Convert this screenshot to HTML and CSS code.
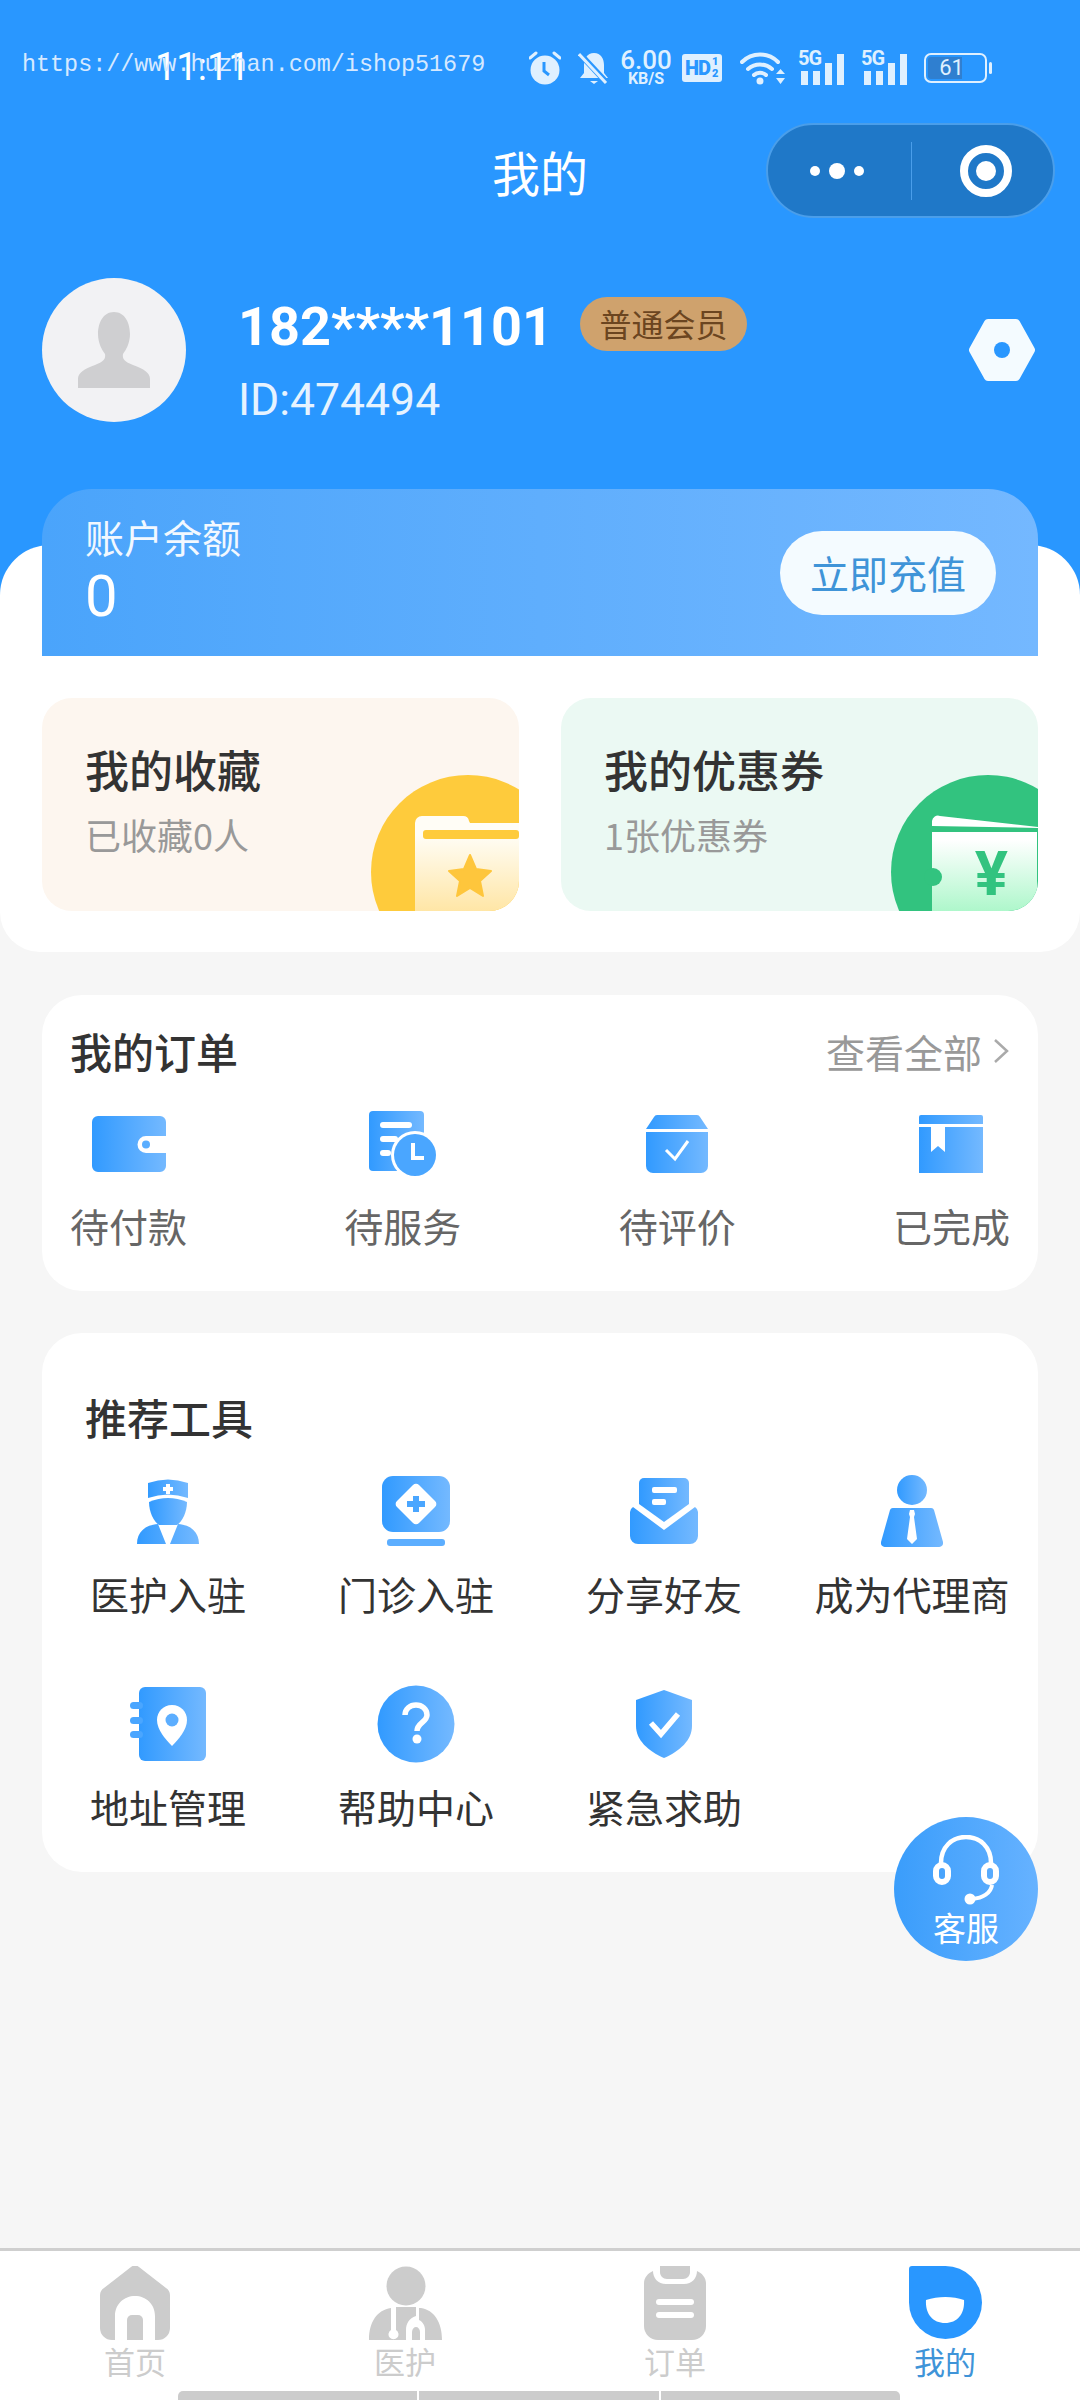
FILE: index.html
```html
<!DOCTYPE html>
<html lang="zh-CN">
<head>
    <meta charset="UTF-8">
    <meta name="viewport" content="width=device-width, initial-scale=1.0">
    <title>我的</title>
    <link rel="stylesheet" href="styles.css">
</head>
<body>
    <svg class="defs" width="0" height="0">
        <defs>
            <linearGradient id="blue"><stop offset="0" stop-color="#319aff"/><stop offset="1" stop-color="#74b9ff"/></linearGradient>
            <linearGradient id="paleyellow" x1="0" y1="0" x2="0" y2="1"><stop offset="0.2" stop-color="#fffdf6"/><stop offset="1" stop-color="#ffe6a6"/></linearGradient>
            <linearGradient id="palegreen" x1="0" y1="0" x2="0" y2="1"><stop offset="0.1" stop-color="#ffffff"/><stop offset="1" stop-color="#aef7cb"/></linearGradient>
        </defs>
    </svg>

    <div id="app">
        <header class="top">
            <div class="watermark">https://www.huzhan.com/ishop51679</div>
            <div class="status-bar">
                <span class="time">11:11</span>
                <div class="status-icons">
                    <svg class="st-alarm" width="32" height="34" viewBox="0 0 32 34">
                        <circle cx="16" cy="19" r="14.5" fill="#dff0ff"/>
                        <path d="M1 7l6-5M31 7l-6-5" stroke="#dff0ff" stroke-width="3" stroke-linecap="round"/>
                        <path d="M15 11v9l5 4" fill="none" stroke="#2997ff" stroke-width="3"/>
                    </svg>
                    <svg class="st-bell" width="32" height="34" viewBox="0 0 32 34">
                        <path d="M16 2c7 0 10 6 10 12v8l4 5H2l4-5v-8C6 8 9 2 16 2z" fill="#dff0ff"/>
                        <path d="M12 30h8l-4 3z" fill="#dff0ff"/>
                        <path d="M2 3l27 29" stroke="#2997ff" stroke-width="6"/>
                        <path d="M1 3l27 29" stroke="#dff0ff" stroke-width="3"/>
                    </svg>
                    <div class="st-speed"><b>6.00</b><span>KB/S</span></div>
                    <div class="st-hd">HD<small>1<br>2</small></div>
                    <svg class="st-wifi" width="46" height="34" viewBox="0 0 46 34">
                        <path d="M2 11c10-10 26-10 36 0M8 18c7-6 17-6 24 0M14 24c3-3 9-3 12 0" fill="none" stroke="#dff0ff" stroke-width="4" stroke-linecap="round"/>
                        <circle cx="20" cy="30" r="3.5" fill="#dff0ff"/>
                        <path d="M36 23l4.500-5 4.500 5zM36 27l4.500 6 4.500-6z" fill="#dff0ff"/>
                    </svg>
                    <div class="st-signal"><span class="st-5g">5G</span><i class="b1"></i><i class="b1"></i><i class="b2"></i><i class="b3"></i></div>
                    <div class="st-signal"><span class="st-5g">5G</span><i class="b1"></i><i class="b1"></i><i class="b2"></i><i class="b3"></i></div>
                    <div class="st-battery"><div class="st-level">61</div></div>
                </div>
            </div>
            <nav class="navbar">
                <span></span>
                <h1>我的</h1>
                <div class="capsule">
                    <svg width="56" height="16" viewBox="0 0 56 16"><circle cx="6" cy="8" r="5" fill="#fff"/><circle cx="28" cy="8" r="8" fill="#fff"/><circle cx="50" cy="8" r="5" fill="#fff"/></svg>
                    <i class="capsule-line"></i>
                    <svg width="54" height="54" viewBox="0 0 54 54"><circle cx="27" cy="27" r="22" fill="none" stroke="#fff" stroke-width="8"/><circle cx="27" cy="27" r="10" fill="#fff"/></svg>
                </div>
            </nav>
            <div class="profile">
                <div class="avatar">
                    <svg width="76" height="76" viewBox="0 0 76 76"><path d="M38 0c11 0 16 11 16 22 0 9-4 16-7 20-1 5 2 8 10 11 11 4 17 8 17 14v9H2v-9c0-6 6-10 17-14 8-3 11-6 10-11-3-4-7-11-7-20C22 11 27 0 38 0z" fill="#cfcfd1"/></svg>
                </div>
                <div class="profile-info">
                    <div class="name-row"><span class="phone">182****1101</span><span class="badge">普通会员</span></div>
                    <div class="user-id">ID:474494</div>
                </div>
                <svg class="settings" width="68" height="64" viewBox="0 0 68 64"><path d="M20 5h28l15 27-15 27H20L5 32z" fill="#f4fbff" stroke="#f4fbff" stroke-width="8" stroke-linejoin="round"/><circle cx="34" cy="32" r="8" fill="#2997ff"/></svg>
            </div>
        </header>

        <section class="panel">
            <div class="balance">
                <div>
                    <div class="balance-label">账户余额</div>
                    <div class="balance-num">0</div>
                </div>
                <div class="recharge">立即充值</div>
            </div>
            <div class="promo-row">
                <div class="promo promo-fav">
                    <div class="promo-title">我的收藏</div>
                    <div class="promo-sub">已收藏0人</div>
                    <svg class="promo-pic" width="149" height="136" viewBox="0 0 149 136">
                        <circle cx="98" cy="97" r="97" fill="#fecb3c"/>
                        <path d="M45 136V48a7 7 0 0 1 7-7h41a6 6 0 0 1 6 5l1 2h49v88z" fill="url(#paleyellow)"/>
                        <rect x="53" y="55" width="96" height="9" rx="3" fill="#fecb3c"/>
                        <path d="M100 80l6 14 15 2-11 10 3 15-13-8-13 8 3-15-11-10 15-2z" fill="#fec63c" stroke="#fec63c" stroke-width="2" stroke-linejoin="round"/>
                    </svg>
                </div>
                <div class="promo promo-coupon">
                    <div class="promo-title">我的优惠券</div>
                    <div class="promo-sub">1张优惠券</div>
                    <svg class="promo-pic" width="147" height="136" viewBox="0 0 147 136">
                        <circle cx="97" cy="97" r="97" fill="#32c37f"/>
                        <path d="M41 136V57l105 0v79z" fill="url(#palegreen)"/>
                        <path d="M41 51V46a6 6 0 0 1 8-5l98 11v1z" fill="#fff"/>
                        <circle cx="42" cy="102" r="9" fill="#32c37f"/>
                    </svg>
                    <span class="yuan">¥</span>
                </div>
            </div>
        </section>

        <section class="card orders">
            <div class="orders-head">
                <h2>我的订单</h2>
                <div class="more">查看全部
                    <svg width="18" height="26" viewBox="0 0 18 26"><path d="M3 2l12 11L3 24" fill="none" stroke="#aaa" stroke-width="2.500"/></svg>
                </div>
            </div>
            <div class="orders-row">
                <div class="order-item">
                    <div class="icon-box">
                        <svg width="74" height="56" viewBox="0 0 74 56"><path d="M6 0h62a6 6 0 0 1 6 6v14H54a8.500 8.500 0 0 0 0 17h20v13a6 6 0 0 1-6 6H6a6 6 0 0 1-6-6V6a6 6 0 0 1 6-6z" fill="url(#blue)"/><circle cx="54" cy="28.500" r="4" fill="#5aaeff"/></svg>
                    </div>
                    <span>待付款</span>
                </div>
                <div class="order-item">
                    <div class="icon-box">
                        <svg width="68" height="66" viewBox="0 0 68 66"><path d="M4 0h47a4 4 0 0 1 4 4v56H4a4 4 0 0 1-4-4V4a4 4 0 0 1 4-4z" fill="url(#blue)"/><rect x="11" y="11" width="32" height="6" rx="3" fill="#fff"/><rect x="11" y="25" width="18" height="6" rx="3" fill="#fff"/><rect x="11" y="39" width="11" height="6" rx="3" fill="#fff"/><circle cx="46" cy="44" r="24" fill="#fff"/><circle cx="46" cy="44" r="21" fill="#4aa6ff"/><path d="M44 32v15h11" fill="none" stroke="#fff" stroke-width="4"/></svg>
                    </div>
                    <span>待服务</span>
                </div>
                <div class="order-item">
                    <div class="icon-box">
                        <svg width="62" height="58" viewBox="0 0 62 58"><path d="M11 0h40a4 4 0 0 1 3 2l8 12H0L8 2a4 4 0 0 1 3-2z" fill="url(#blue)"/><path d="M0 17h62v34a7 7 0 0 1-7 7H7a7 7 0 0 1-7-7z" fill="url(#blue)"/><path d="M20 35l9 9 13-18" fill="none" stroke="#fff" stroke-width="3"/></svg>
                    </div>
                    <span>待评价</span>
                </div>
                <div class="order-item">
                    <div class="icon-box">
                        <svg width="64" height="58" viewBox="0 0 64 58"><path d="M2 0h60a2 2 0 0 1 2 2v7H0V2a2 2 0 0 1 2-2z" fill="url(#blue)"/><path d="M0 12h12v25l7-6 7 6V12h38v46H0z" fill="url(#blue)"/></svg>
                    </div>
                    <span>已完成</span>
                </div>
            </div>
        </section>

        <section class="card tools">
            <h2>推荐工具</h2>
            <div class="tools-grid">
                <div class="tool">
                    <div class="icon-box">
                        <svg width="62" height="66" viewBox="0 0 62 66"><path d="M11 5q20-7 40 0v15q-20-7-40 0z" fill="url(#blue)"/><path d="M29 6h4v3h3v4h-3v3h-4v-3h-3V9h3z" fill="#fff"/><path d="M12 24q19-8 38 0c0 10-5 20-10 23H22c-5-3-10-13-10-23z" fill="url(#blue)"/><path d="M0 66c0-12 8-19 21-20l8 20zM62 66c0-12-8-19-21-20l-8 20z" fill="url(#blue)"/></svg>
                    </div>
                    <span>医护入驻</span>
                </div>
                <div class="tool">
                    <div class="icon-box">
                        <svg width="68" height="70" viewBox="0 0 68 70"><rect width="68" height="56" rx="11" fill="url(#blue)"/><rect x="5" y="63" width="58" height="7" rx="3" fill="#5caeff"/><path d="M31 9a4 4 0 0 1 6 0l16 16a4 4 0 0 1 0 6L37 47a4 4 0 0 1-6 0L15 31a4 4 0 0 1 0-6z" fill="#fff"/><path d="M31 20h6v5h6v6h-6v5h-6v-5h-6v-6h6z" fill="#4aa6ff"/></svg>
                    </div>
                    <span>门诊入驻</span>
                </div>
                <div class="tool">
                    <div class="icon-box">
                        <svg width="68" height="66" viewBox="0 0 68 66"><path d="M14 0h40a5 5 0 0 1 5 5v21L34 44 9 26V5a5 5 0 0 1 5-5z" fill="url(#blue)"/><rect x="22" y="9" width="25" height="6" rx="2" fill="#fff"/><rect x="22" y="21" width="14" height="6" rx="2" fill="#fff"/><path d="M0 34q0-3 3-5l31 23 31-23q3 2 3 5v24a8 8 0 0 1-8 8H8a8 8 0 0 1-8-8z" fill="url(#blue)"/></svg>
                    </div>
                    <span>分享好友</span>
                </div>
                <div class="tool">
                    <div class="icon-box">
                        <svg width="62" height="72" viewBox="0 0 62 72"><circle cx="31" cy="15" r="15" fill="url(#blue)"/><path d="M12 33h38a3 3 0 0 1 3 2l9 32a4 4 0 0 1-4 5H4a4 4 0 0 1-4-5l9-32a3 3 0 0 1 3-2z" fill="url(#blue)"/><path d="M29 35h4l1 4-1 3 3 22-5 5-5-5 3-22-1-3z" fill="#fff"/></svg>
                    </div>
                    <span>成为代理商</span>
                </div>
                <div class="tool">
                    <div class="icon-box">
                        <svg width="76" height="74" viewBox="0 0 76 74"><rect x="9" width="67" height="74" rx="6" fill="url(#blue)"/><rect y="15" width="13" height="7" rx="3.500" fill="#4aa6ff"/><rect y="30" width="13" height="7" rx="3.500" fill="#4aa6ff"/><rect y="44" width="13" height="7" rx="3.500" fill="#4aa6ff"/><path d="M42 18c9 0 15 7 15 15 0 10-9 20-15 26-6-6-15-16-15-26 0-8 6-15 15-15z" fill="#fff"/><circle cx="42" cy="33" r="6.500" fill="#5caeff"/></svg>
                    </div>
                    <span>地址管理</span>
                </div>
                <div class="tool">
                    <div class="icon-box">
                        <svg width="78" height="78" viewBox="0 0 78 78"><circle cx="39" cy="39" r="38.500" fill="url(#blue)"/><path d="M28 30c0-6 5-10 11-10s11 4 11 10c0 7-10 8-10 16" fill="none" stroke="#fff" stroke-width="5.500"/><circle cx="40" cy="54" r="4.500" fill="#fff"/></svg>
                    </div>
                    <span>帮助中心</span>
                </div>
                <div class="tool">
                    <div class="icon-box">
                        <svg width="56" height="68" viewBox="0 0 56 68"><path d="M28 0l28 10v26c0 14-12 25-28 32C12 61 0 50 0 36V10z" fill="url(#blue)"/><path d="M15 33l10 11 17-20" fill="none" stroke="#fff" stroke-width="5.500"/></svg>
                    </div>
                    <span>紧急求助</span>
                </div>
            </div>
        </section>

        <div class="spacer"></div>

        <footer class="tabbar">
            <div class="tabs">
                <div class="tab">
                    <svg width="70" height="74" viewBox="0 0 70 74"><path d="M31 1a6 6 0 0 1 8 0l27 21a9 9 0 0 1 4 7v33a12 12 0 0 1-12 12h-3V50c0-12-9-20-20-20s-20 8-20 20v24h-3A12 12 0 0 1 0 62V29a9 9 0 0 1 4-7z" fill="#ccc"/><path d="M27 74V54a5 5 0 0 1 5-5h6a5 5 0 0 1 5 5v20z" fill="#ccc"/></svg>
                    <span>首页</span>
                </div>
                <div class="tab">
                    <svg width="73" height="74" viewBox="0 0 73 74"><circle cx="37" cy="20" r="19.500" fill="#ccc"/><path d="M22 42v22a5 5 0 1 0 5 0V41l20 0v9c-7 2-10 8-10 14v10H0c0-18 8-30 22-32z" fill="#ccc"/><path d="M52 42c13 2 21 14 21 32H56V64c0-4-2-8-6-10V42z" fill="#ccc"/><path d="M43 74v-8c0-3 2-5 4-5s4 2 4 5v8z" fill="#ccc"/></svg>
                    <span>医护</span>
                </div>
                <div class="tab">
                    <svg width="62" height="74" viewBox="0 0 62 74"><path d="M16 0h30v6c0 4-3 7-7 7H23c-4 0-7-3-7-7z" fill="#ccc"/><path d="M9 5c0 7 5 13 13 13h18c8 0 13-6 13-13 5 2 9 7 9 12v43a14 14 0 0 1-14 14H14A14 14 0 0 1 0 60V17c0-5 4-10 9-12z" fill="#ccc"/><rect x="12" y="33" width="38" height="6" rx="3" fill="#fff"/><rect x="12" y="46" width="38" height="6" rx="3" fill="#fff"/></svg>
                    <span>订单</span>
                </div>
                <div class="tab tab-on">
                    <svg width="73" height="74" viewBox="0 0 73 74"><path d="M0 3a3 3 0 0 1 3-3h33.500A36.500 36.500 0 1 1 0 36.500z" fill="#2997ff"/><path d="M17 34c12-4 27-4 38 0 1 14-7 23-19 23S16 48 17 34z" fill="#fff"/></svg>
                    <span>我的</span>
                </div>
            </div>
            <div class="home-bar"><i></i><i></i><i></i></div>
        </footer>

        <div class="service">
            <svg width="68" height="70" viewBox="0 0 68 70">
                <path d="M9 28C9 12 20 2 34 2s25 10 25 26" fill="none" stroke="#fff" stroke-width="4.500"/>
                <rect x="4" y="30" width="12" height="17" rx="6" fill="none" stroke="#fff" stroke-width="6"/>
                <rect x="52" y="30" width="12" height="17" rx="6" fill="none" stroke="#fff" stroke-width="6"/>
                <path d="M60 50c-1 8-9 13-20 14" fill="none" stroke="#fff" stroke-width="4"/>
                <circle cx="38" cy="64" r="5.500" fill="#fff"/>
            </svg>
            <span>客服</span>
        </div>
    </div>
</body>
</html>
```

FILE: styles.css
```css
* {
    box-sizing: border-box;
}

html, body {
    margin: 0;
    padding: 0;
}

body {
    font-family: "Noto Sans CJK SC", Roboto, sans-serif;
    background: #f6f6f6;
    color: #333;
}

h1, h2 {
    margin: 0;
    font-weight: 500;
}

.defs {
    position: absolute;
}

#app {
    position: relative;
    width: 1080px;
    height: 2400px;
    display: flex;
    flex-direction: column;
    overflow: hidden;
}

/* blue header */
.top {
    position: relative;
    height: 600px;
    flex: none;
    background: #2997ff;
    color: #fff;
}

.watermark {
    position: absolute;
    left: 22px;
    top: 50px;
    font-family: "Liberation Mono", monospace;
    font-size: 23.400px;
    line-height: 30px;
    color: #d6e9ff;
}

.status-bar {
    height: 123px;
    padding: 50px 0 0 155px;
    display: flex;
}

.time {
    font-family: Roboto, sans-serif;
    font-size: 38px;
    line-height: 34px;
    width: 88px;
    margin-right: 286px;
    white-space: nowrap;
}

.status-icons {
    height: 36px;
    display: flex;
    align-items: center;
    color: #dff0ff;
    font-family: Roboto, sans-serif;
}

.st-bell {
    margin-left: 17px;
}

.st-speed {
    width: 52px;
    margin-left: 10px;
    display: flex;
    flex-direction: column;
    align-items: center;
    line-height: 1;
}

.st-speed b {
    font-size: 26px;
    font-weight: 500;
    line-height: 21px;
}

.st-speed span {
    font-size: 16px;
    font-weight: 700;
    line-height: 15px;
}

.st-hd {
    width: 40px;
    height: 28px;
    margin-left: 10px;
    background: #dff0ff;
    border-radius: 3px;
    color: #2997ff;
    font-size: 20px;
    font-weight: 900;
    line-height: 28px;
    padding-left: 3px;
    display: flex;
    align-items: center;
    letter-spacing: -1px;
}

.st-hd small {
    font-size: 11px;
    line-height: 12px;
    margin-left: 2px;
}

.st-wifi {
    margin-left: 18px;
}

.st-signal {
    position: relative;
    width: 47px;
    height: 34px;
    margin-left: 12px;
    display: flex;
    align-items: flex-end;
    justify-content: space-between;
    padding: 0 1px 0 3px;
}

.st-signal + .st-signal {
    margin-left: 16px;
}

.st-signal i {
    width: 7px;
    background: #dff0ff;
}

.st-signal .b1 {
    height: 14px;
}

.st-signal .b2 {
    height: 22px;
}

.st-signal .b3 {
    height: 31px;
}

.st-5g {
    position: absolute;
    left: 0;
    top: -3px;
    font-size: 20px;
    font-weight: 700;
    line-height: 20px;
    letter-spacing: -1px;
}

.st-battery {
    position: relative;
    width: 63px;
    height: 30px;
    margin-left: 16px;
    border: 2.500px solid #dff0ff;
    border-radius: 7px;
    padding: 2px;
}

.st-battery::after {
    content: "";
    position: absolute;
    right: -7px;
    top: 7px;
    width: 3px;
    height: 12px;
    background: #dff0ff;
    border-radius: 2px;
}

.st-level {
    height: 100%;
    border-radius: 3px;
    font-size: 22px;
    line-height: 21px;
    background: linear-gradient(to right, #2f7fd0 61%, transparent 61%);
    text-align: center;
    padding-right: 8px;
}

.navbar {
    height: 95px;
    display: grid;
    grid-template-columns: 1fr auto 1fr;
    align-items: center;
    padding: 0 25px;
}

.navbar h1 {
    font-size: 48px;
    font-weight: 400;
}

.capsule {
    justify-self: end;
    width: 289px;
    height: 95px;
    background: #1f78c8;
    border: 2px solid #4a9eea;
    border-radius: 48px;
    display: flex;
    align-items: center;
    padding-left: 41px;
}

.capsule-line {
    width: 1px;
    height: 58px;
    background: #4a9eea;
    margin: 0 47px 0 46px;
}

.profile {
    margin-top: 60px;
    padding: 0 42px;
    display: flex;
    align-items: flex-start;
}

.avatar {
    width: 144px;
    height: 144px;
    border-radius: 50%;
    background: #f2f2f4;
    display: flex;
    justify-content: center;
    align-items: center;
    margin-right: 52px;
}

.profile-info {
    flex: 1;
    padding-top: 26px;
}

.name-row {
    display: flex;
    align-items: center;
    height: 54px;
    margin-top: -4px;
}

.phone {
    font-family: Roboto, sans-serif;
    font-size: 54px;
    font-weight: 700;
    line-height: 54px;
}

.badge {
    width: 167px;
    height: 54px;
    margin-left: 27px;
    margin-top: -6px;
    background: #cfa26d;
    border-radius: 27px;
    color: #6b4520;
    font-size: 32px;
    line-height: 52px;
    text-align: center;
}

.user-id {
    margin-top: 21px;
    font-family: Roboto, sans-serif;
    font-size: 44.500px;
    line-height: 50px;
    color: #e6f3ff;
}

.settings {
    margin: 40px 2px 0 0;
}

/* white panel */
.panel {
    position: relative;
    flex: none;
    height: 407px;
    margin-top: -55px;
    padding: 0 42px;
    background: #fff;
    border-radius: 50px 50px 40px 40px;
}

.balance {
    height: 167px;
    margin-top: -56px;
    padding: 20px 42px 0 43px;
    display: flex;
    justify-content: space-between;
    background: linear-gradient(to right, #4aa4fb, #74b8ff);
    border-radius: 50px 50px 0 0;
    color: #fff;
}

.balance-label {
    font-size: 39px;
    line-height: 54px;
    color: #f2f8ff;
}

.balance-num {
    font-family: Roboto, sans-serif;
    font-size: 58px;
    line-height: 66px;
}

.recharge {
    width: 216px;
    height: 84px;
    margin-top: 22px;
    background: #f4fbff;
    border-radius: 42px;
    color: #3f94d8;
    font-size: 39px;
    line-height: 82px;
    text-align: center;
}

.promo-row {
    display: flex;
    justify-content: space-between;
    margin-top: 42px;
}

.promo {
    position: relative;
    width: 477px;
    height: 213px;
    padding: 39px 0 0 43px;
    border-radius: 30px;
    overflow: hidden;
}

.promo-fav {
    background: #fdf6ef;
}

.promo-coupon {
    background: #ebf9f3;
}

.promo-title {
    font-size: 44px;
    font-weight: 500;
    line-height: 64px;
    color: #333;
}

.promo-sub {
    margin-top: 8px;
    font-size: 36px;
    line-height: 50px;
    color: #999;
}

.promo-pic {
    position: absolute;
    right: 0;
    bottom: 0;
}

.yuan {
    position: absolute;
    right: 30px;
    bottom: 6px;
    font-family: Roboto, sans-serif;
    font-size: 62px;
    font-weight: 700;
    line-height: 62px;
    color: #32c37f;
}

/* white cards */
.card {
    flex: none;
    margin: 0 42px;
    background: #fff;
    border-radius: 40px;
}

.card h2 {
    font-size: 42px;
    line-height: 46px;
    color: #333;
}

.orders {
    margin-top: 43px;
    padding: 33px 28px 41px 28px;
}

.orders-head {
    display: flex;
    justify-content: space-between;
    align-items: center;
}

.more {
    display: flex;
    align-items: center;
    gap: 10px;
    font-size: 39px;
    line-height: 46px;
    color: #999;
}

.orders-row {
    margin-top: 37px;
    display: flex;
    justify-content: space-between;
}

.order-item {
    width: 117px;
    display: flex;
    flex-direction: column;
    align-items: center;
    font-size: 39px;
    line-height: 50px;
    color: #666;
    white-space: nowrap;
}

.order-item .icon-box {
    height: 66px;
    margin-bottom: 23px;
}

.icon-box {
    display: flex;
    align-items: center;
    justify-content: center;
}

.tools {
    margin-top: 42px;
    padding: 61px 2px 41px;
}

.tools h2 {
    margin-left: 41px;
}

.tools-grid {
    margin-top: 33px;
    display: grid;
    grid-template-columns: repeat(4, 248px);
    row-gap: 68px;
}

.tool {
    display: flex;
    flex-direction: column;
    align-items: center;
    font-size: 39px;
    line-height: 50px;
    color: #333;
    white-space: nowrap;
}

.tool .icon-box {
    height: 76px;
    margin-bottom: 19px;
}

.spacer {
    flex: 1;
}

/* bottom tabs */
.tabbar {
    flex: none;
    height: 152px;
    border-top: 3px solid #cfcfcf;
    background: #fff;
}

.tabs {
    display: flex;
    height: 140px;
    padding-top: 15px;
}

.tab {
    width: 270px;
    display: flex;
    flex-direction: column;
    align-items: center;
    font-size: 31px;
    line-height: 36px;
    color: #ccc;
    gap: 3px;
}

.tab-on {
    color: #3f94d8;
}

.home-bar {
    margin: 0 180px 0 178px;
    height: 9px;
    display: flex;
    gap: 2px;
}

.home-bar i {
    flex: 1;
    background: #ccc;
}

.home-bar i:first-child {
    border-radius: 5px 0 0 0;
}

.home-bar i:last-child {
    border-radius: 0 5px 0 0;
}

/* floating service button */
.service {
    position: absolute;
    left: 894px;
    top: 1817px;
    width: 144px;
    height: 144px;
    border-radius: 50%;
    background: linear-gradient(to right, #3a9dfb, #66b2ff);
    display: flex;
    flex-direction: column;
    align-items: center;
    padding-top: 18px;
    color: #fff;
    font-size: 33px;
    line-height: 40px;
}

.service span {
    margin-top: 2px;
}
```
